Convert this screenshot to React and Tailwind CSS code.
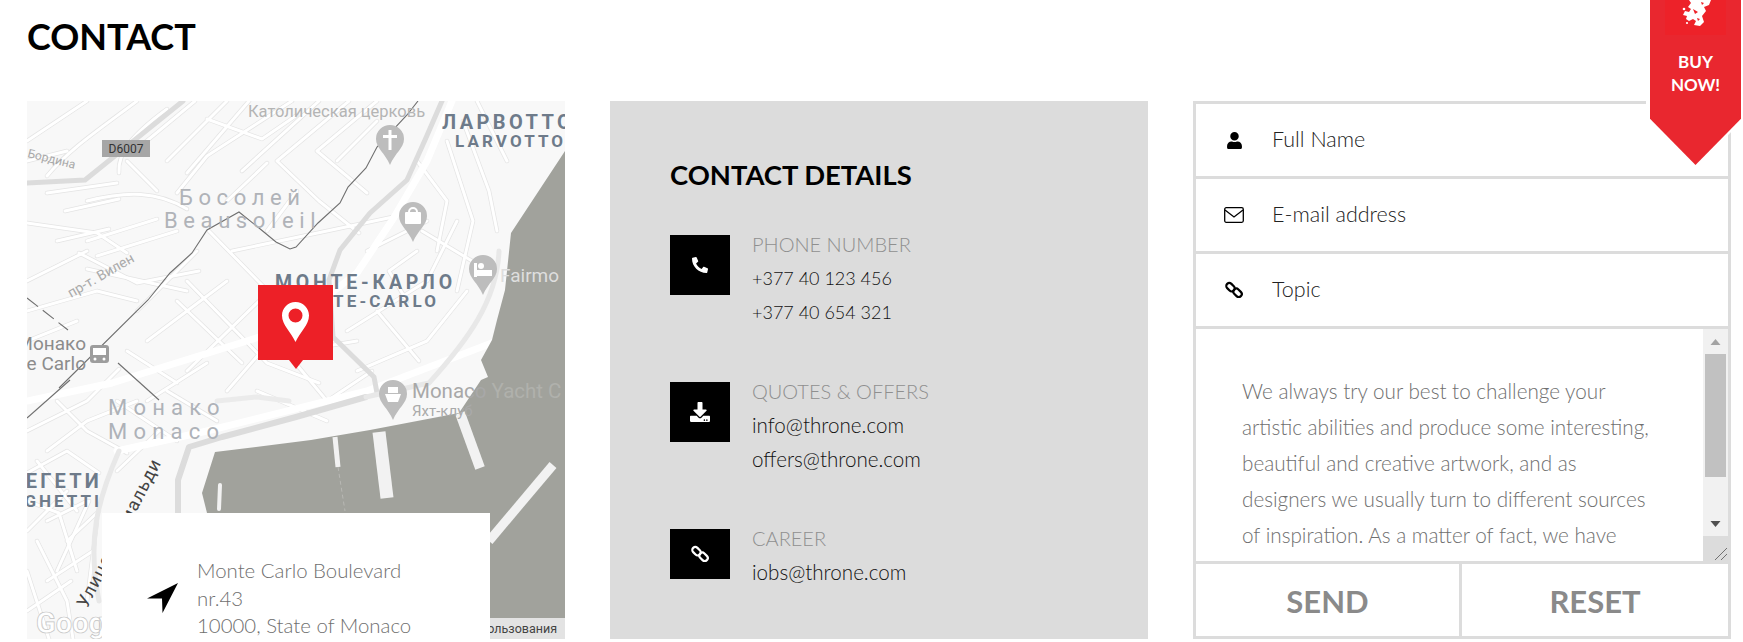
import { FaPhone, FaDownload, FaUser } from 'react-icons/fa';

// white street network of the map, in map coordinates
const STREETS = [
  'M60 0 L0 40', 'M110 0 C70 30 40 50 20 75', 'M140 8 C110 30 90 50 92 72', 'M200 0 L140 60', 'M222 0 L160 72',
  'M265 0 L180 55 L150 92', 'M292 0 L215 70', 'M322 0 L250 60 L292 100 L332 132', 'M350 0 L290 50 L340 92',
  'M0 122 L70 132 L100 152', 'M52 152 L110 182 L172 170', 'M60 168 L160 190', 'M30 140 L82 128', 'M38 110 L92 98',
  'M0 60 L40 50', 'M160 180 L240 262 L292 282', 'M182 130 L282 232', 'M205 150 L300 130 L366 116', 'M150 200 L215 262',
  'M110 210 L170 150', 'M120 240 L200 180', 'M160 270 L232 200', 'M200 290 L265 215', 'M250 240 L300 300', 'M0 180 L60 150',
  'M320 230 L400 180 L430 120', 'M330 270 L400 240 L440 190', 'M380 200 L362 170 L390 150', 'M420 40 L446 120 L430 190',
  'M436 20 L462 90 L470 130', 'M390 60 L420 100 L410 150', 'M340 150 L400 120', 'M0 330 L60 300 L92 268', 'M20 350 L60 320 L110 300',
  'M30 300 L60 330 L100 352', 'M0 372 L40 350 L72 372', 'M0 400 L32 412 L50 470', 'M20 420 L60 400', 'M10 440 L40 500 L46 538',
  'M0 470 L22 538', 'M62 400 L30 470', 'M70 420 L60 500', 'M120 300 L180 262', 'M230 290 L300 320', 'M90 300 L150 340',
  'M300 300 L345 270', 'M270 90 L240 130', 'M100 60 L130 90', 'M60 100 C100 90 130 90 160 108',
  'M168 0 L110 48', 'M20 92 L90 82', 'M60 140 L130 118', 'M70 155 L150 130', 'M0 210 L70 190 L110 200', 'M0 240 L50 220',
  'M180 18 L235 38 L270 14', 'M240 62 L200 100', 'M310 60 L350 20', 'M450 0 L480 60', 'M395 130 L445 160', 'M350 210 L392 260',
  'M10 360 L50 410', 'M0 430 L40 390', 'M40 440 L72 410', 'M20 480 L66 450', 'M0 510 L44 480', 'M90 370 L132 330',
  'M140 290 L190 320', 'M270 250 L330 240', 'M100 250 L150 282',
];

const BOULEVARDS = ['M0 300 L85 282 L258 228 L330 172 L366 118 L400 60 L425 0', 'M90 350 L180 330 L340 290 L470 240'];

function Pin({ x, y, children }) {
  return (
    <g transform={`translate(${x} ${y})`}>
      <path d="M-14 14a14 14 0 1 1 28 0c0 9-9 14-14 26c-5-12-14-17-14-26z" fill="#bdbdbd" />
      {children}
    </g>
  );
}

function MapDrawing() {
  return (
    <svg viewBox="0 0 538 538" className="absolute inset-0 h-full w-full" fontFamily="Roboto, sans-serif">
      <rect width="538" height="538" fill="#f8f8f8" />

      {/* streets, a pale casing under a white core */}
      <g fill="none" strokeLinecap="round" strokeLinejoin="round">
        <g stroke="#e4e4e4" strokeWidth="4.4">
          {STREETS.map((d, i) => <path key={i} d={d} />)}
        </g>
        <g stroke="#ffffff" strokeWidth="3">
          {STREETS.map((d, i) => <path key={i} d={d} />)}
        </g>
        {BOULEVARDS.map((d) => <path key={d} d={d} stroke="#ffffff" strokeWidth="7" />)}
      </g>

      {/* main roads */}
      <g fill="none" stroke="#dcdcdc" strokeWidth="5" strokeLinejoin="round" strokeLinecap="round">
        <path d="M156 0 L58 79 L0 82" />
        <path d="M415 0 L398 39 L380 79 L343 112 L313 149 L302 179 L306 236 L347 276 L350 292" />
        <path d="M339 296 L269 316 L195 336 L162 346 L151 379 L151 415" strokeWidth="6" />
        <path d="M92 350 C70 400 60 440 72 500" stroke="#e8e8e8" strokeWidth="5" />
        <path d="M472 150 C470 200 440 240 402 282 L339 296" stroke="#e8e8e8" strokeWidth="5" />
        <path d="M190 300 L230 296 L262 300" stroke="#ebebeb" strokeWidth="5" />
      </g>

      {/* sea and piers */}
      <path d="M538 50 L484 132 L478 189 L470 219 L465 239 L454 259 L461 276 L454 279 L432 312 L343 329 L284 339 L188 351 L175 392 L180 412 L180 538 L538 538 Z" fill="#a1a29c" />
      <g fill="none" stroke="#f2f2f2" strokeLinecap="butt">
        <path d="M308 336 L311 366" strokeWidth="5" />
        <path d="M311 366 L318 410" stroke="#b8b8b4" strokeWidth="1" strokeDasharray="4 3" />
        <path d="M352 331 L360 397" strokeWidth="13" />
        <path d="M433 312 L453 367" strokeWidth="10" />
        <path d="M526 364 L462 440" strokeWidth="9" />
        <path d="M193 384 L192 408" strokeWidth="4" strokeLinecap="round" />
      </g>

      {/* rail lines */}
      <g fill="none" stroke="#6f6f6f" strokeWidth="1.1">
        <path d="M391 0 L380 14 L350 46 L339 67 L321 86 L313 102 L291 122 L269 146 L263 148 L249 141 L232 127 L212 111 L180 129 L165 152 L143 172 L121 199 L32 287" />
        <path d="M43 279 L0 317" />
        <path d="M0 197 L41 229" strokeDasharray="14 6" />
        <path d="M91 262 L132 299" />
      </g>

      {/* places */}
      <Pin x={363} y={24}><rect x="-1.5" y="5" width="3" height="20" fill="#fff" /><rect x="-7" y="10" width="14" height="3" fill="#fff" /></Pin>
      <Pin x={386} y={101}><rect x="-8" y="10" width="16" height="12" rx="1" fill="#fff" /><circle cy="10" r="4" fill="none" stroke="#fff" strokeWidth="2" /></Pin>
      <Pin x={456} y={154}><rect x="-9" y="15" width="18" height="6" fill="#fff" /><rect x="-9" y="8" width="3" height="14" fill="#fff" /><circle cx="-2" cy="11" r="3" fill="#fff" /></Pin>
      <Pin x={366} y={279}><path d="M-8 14h16l-3 8h-10z" fill="#fff" /><rect x="-5" y="7" width="10" height="6" fill="#fff" /></Pin>
      <rect x="63" y="244" width="19" height="18" rx="3" fill="#9d9d9d" />
      <rect x="66" y="247" width="13" height="7" fill="#fff" />
      <circle cx="68" cy="258" r="1.5" fill="#fff" />
      <circle cx="77" cy="258" r="1.5" fill="#fff" />

      {/* labels */}
      <text x="221" y="16" fontSize="16.5" fill="#b4b4b4">Католическая церковь</text>
      <rect x="75" y="39" width="48" height="17" fill="#a6a6a6" />
      <text x="99" y="52" fontSize="12" textAnchor="middle" fill="#333">D6007</text>
      <text x="0" y="56" fontSize="12" fill="#a8a8a8" transform="rotate(14 0 56)">Бордина</text>
      <text x="152" y="104" fontSize="22" letterSpacing="5.6" fill="#b0b3b8">Босолей</text>
      <text x="137" y="127" fontSize="22" letterSpacing="5.6" fill="#b0b3b8">Beausoleil</text>
      <text x="44" y="197" fontSize="14" fill="#aaa" transform="rotate(-30 44 197)">пр-т. Вилен</text>
      <text x="415" y="28" fontSize="20" fontWeight="700" letterSpacing="3.4" fill="#6e7b8a">ЛАРВОТТО</text>
      <text x="428" y="46" fontSize="17" fontWeight="700" letterSpacing="3.1" fill="#6e7b8a">LARVOTTO</text>
      <text x="248" y="188" fontSize="19.5" fontWeight="700" letterSpacing="3.8" fill="#6e7b8a">МОНТЕ-КАРЛО</text>
      <text x="258" y="206" fontSize="17" fontWeight="700" letterSpacing="3.2" fill="#6e7b8a">MONTE-CARLO</text>
      <text x="473" y="181" fontSize="19" fill="#dedede">Fairmo</text>
      <text x="59" y="249" fontSize="19" textAnchor="end" fill="#8c8c8c">Монако</text>
      <text x="59" y="269" fontSize="19" textAnchor="end" fill="#8c8c8c">Monte Carlo</text>
      <text x="81" y="314" fontSize="22" letterSpacing="6.2" fill="#aeb2b8">Монако</text>
      <text x="81" y="338" fontSize="22" letterSpacing="6.2" fill="#aeb2b8">Monaco</text>
      <text x="385" y="297" fontSize="20.5" fill="#a8a8a8">Monaco <tspan fill="#b0b1ac">Yacht C</tspan></text>
      <text x="385" y="315" fontSize="15" fill="#aaa">Яхт-клуб</text>
      <text x="75" y="387" fontSize="20" fontWeight="700" letterSpacing="3.2" textAnchor="end" fill="#6e7b8a">ЕГЕТИ</text>
      <text x="75" y="406" fontSize="17" fontWeight="700" letterSpacing="3" textAnchor="end" fill="#6e7b8a">GHETTI</text>
      <text x="60" y="508" fontSize="18" letterSpacing="1" fill="#444" transform="rotate(-63 60 508)">Улица Гримальди</text>
      <text x="9" y="532" fontSize="29" fontWeight="700" fill="#fff" stroke="#c4c4c4" strokeWidth="0.7">Google</text>

      {/* attribution */}
      <rect x="463" y="517" width="75" height="21" fill="#e3e3e3" />
      <text x="530" y="532" fontSize="12.5" textAnchor="end" fill="#444">использования</text>
    </svg>
  );
}

function LionMark() {
  return (
    <svg viewBox="0 0 30 26" className="h-[26px] w-[30px]" fill="#fff">
      <path d="M8 0h22l-2 5-5 2 2 4-4 5 2 6-4 4-6-1 2-4-3-2-4 2-3-2 1-3-4-1 2-4 4 1 2-3-3-2 3-4z" />
      <circle cx="3" cy="9" r="1.3" />
      <circle cx="6" cy="23" r="1.1" />
      <path d="M12 9l5 3-3 2zM20 2l3 1-2 2zM16 18l3 1-2 2z" fill="#ed2229" />
    </svg>
  );
}

// two chain links running from top left to bottom right
function LinkIcon({ size = 18 }) {
  return (
    <svg viewBox="0 0 18 18" width={size} height={size} fill="none" stroke="currentColor" strokeWidth="2.2">
      <rect x="0.8" y="3.2" width="9.4" height="6" rx="3" transform="rotate(45 5.5 6.2)" />
      <rect x="7.8" y="8.8" width="9.4" height="6" rx="3" transform="rotate(45 12.5 11.8)" />
    </svg>
  );
}

function DetailRow({ icon, label, lines, iconH = 'h-[60px]', lineSize = 'text-[20.6px]', className = '' }) {
  return (
    <div className={`flex gap-[22px] ${className}`}>
      <div className={`mt-[8px] flex w-[60px] shrink-0 items-center justify-center bg-black text-white ${iconH}`}>{icon}</div>
      <div className="leading-[34px]">
        <div className="text-[20px] font-light text-[#8f8f8f]">{label}</div>
        {lines.map((l) => <div key={l} className={`font-light text-[#111] ${lineSize}`}>{l}</div>)}
      </div>
    </div>
  );
}

function Field({ icon, label }) {
  return (
    <div className="flex h-[75px] shrink-0 items-center border-b-[3px] border-[#dcdcdc]">
      <div className="flex w-[76px] shrink-0 justify-center text-black">{icon}</div>
      <span className="mb-[2px] text-[21.5px] font-light text-[#222]">{label}</span>
    </div>
  );
}

export default function App() {
  return (
    <div className="relative h-[642px] overflow-hidden bg-white text-black [font-family:Lato,sans-serif]">
      <h1 className="h-[101px] pl-[27px] pt-[14px] text-[36px] font-bold leading-[44px]">CONTACT</h1>

      <div className="grid grid-cols-3 gap-x-[45px] pl-[27px] pr-[12px]">
        {/* MAP */}
        <div className="relative h-[538px] overflow-hidden">
          <MapDrawing />
          <div className="absolute left-[231px] top-[184px] flex h-[75px] w-[75px] items-center justify-center bg-[#ed2027]">
            <svg viewBox="0 0 27 40" className="mb-[2px] h-[40px] w-[27px]">
              <path fillRule="evenodd" fill="#fff" d="M13.5 0C6 0 0 6 0 13.5 0 23 9 30 13.5 40 18 30 27 23 27 13.5 27 6 21 0 13.5 0zm0 6.5a7 7 0 1 1 0 14 7 7 0 0 1 0-14z" />
            </svg>
            <div className="absolute left-[31px] top-[75px] h-0 w-0 border-x-[7px] border-t-[9px] border-x-transparent border-t-[#ed2027]" />
          </div>
          <div className="absolute left-[75px] top-[412px] flex h-[126px] w-[388px] overflow-hidden bg-white pl-[45px] pt-[44px]">
            <svg viewBox="0 0 31 30" className="mr-[19px] mt-[26px] h-[30px] w-[31px] shrink-0">
              <path d="M31 0L0 15.5L15 15.5L15.5 30Z" fill="#000" />
            </svg>
            <div className="whitespace-nowrap text-[20.4px] font-light leading-[27.5px] text-[#6f6f6f]">
              <div>Monte Carlo Boulevard</div>
              <div>nr.43</div>
              <div>10000, State of Monaco</div>
            </div>
          </div>
        </div>

        {/* CONTACT DETAILS */}
        <div className="flex h-[538px] flex-col bg-[#dcdcdc] pl-[60px] pt-[57px]">
          <h2 className="mb-[35px] text-[27.4px] font-bold leading-[34px]">CONTACT DETAILS</h2>
          <DetailRow className="mb-[45px]" lineSize="text-[18px]" icon={<FaPhone className="-scale-x-100 text-[16px]" />} label="PHONE NUMBER" lines={['+377 40 123 456', '+377 40 654 321']} />
          <DetailRow className="mb-[45px]" icon={<FaDownload className="text-[20px]" />} label="QUOTES & OFFERS" lines={['info@throne.com', 'offers@throne.com']} />
          <DetailRow iconH="h-[50px]" icon={<LinkIcon />} label="CAREER" lines={['iobs@throne.com']} />
        </div>

        {/* FORM */}
        <div className="flex h-[538px] flex-col border-[3px] border-[#dcdcdc]">
          <Field icon={<FaUser className="text-[17px]" />} label="Full Name" />
          <Field icon={
            <svg viewBox="0 0 20 16" className="h-[16px] w-[20px]" fill="none" stroke="currentColor" strokeWidth="1.3">
              <rect x="0.7" y="0.7" width="18.6" height="14.6" rx="1.5" />
              <path d="M1 3l9 7 9-7" />
            </svg>
          } label="E-mail address" />
          <Field icon={<LinkIcon />} label="Topic" />

          <div className="flex h-[235px] shrink-0 border-b-[3px] border-[#dcdcdc]">
            <div className="flex-1 overflow-hidden pl-[46px] pr-[45px] pt-[44px] text-[20.7px] font-light leading-[36px] text-[#6f6f6f]">
              We always try our best to challenge your artistic abilities and produce some interesting, beautiful and creative artwork, and as designers we usually turn to different sources of inspiration. As a matter of fact, we have
            </div>
            <div className="flex w-[25px] shrink-0 flex-col bg-[#f1f1f1]">
              <div className="flex h-[25px] shrink-0 items-center justify-center">
                <svg viewBox="0 0 10 6" className="h-[6px] w-[11px]"><path d="M0 6L5 0L10 6Z" fill="#a3a3a3" /></svg>
              </div>
              <div className="flex-1 px-[2px]">
                <div className="h-[123px] bg-[#c1c1c1]" />
              </div>
              <div className="flex h-[25px] shrink-0 items-center justify-center">
                <svg viewBox="0 0 10 6" className="h-[6px] w-[11px]"><path d="M0 0L5 6L10 0Z" fill="#505050" /></svg>
              </div>
              <div className="flex h-[25px] shrink-0 items-end justify-end bg-[#dcdcdc]">
                <svg viewBox="0 0 14 14" className="h-[14px] w-[14px]"><path d="M1 13L13 1M7 13L13 7" stroke="#555" strokeWidth="0.8" /></svg>
              </div>
            </div>
          </div>

          <div className="grid flex-1 grid-cols-2 text-[31px] font-bold text-[#8a8a8a]">
            <div className="flex items-center justify-center border-r-[3px] border-[#dcdcdc] pt-[2px]">SEND</div>
            <div className="flex items-center justify-center pt-[2px]">RESET</div>
          </div>
        </div>
      </div>

      {/* BUY NOW ribbon, white halo behind it */}
      <div className="absolute right-0 top-0 h-[169px] w-[97px] bg-white [clip-path:polygon(0_0,100%_0,100%_71%,50%_100%,0_71%)]" />
      <div className="absolute right-[2px] top-0 flex h-[165px] w-[91px] flex-col items-center bg-[#e9272f] [clip-path:polygon(0_0,100%_0,100%_72%,50%_100%,0_72%)]">
        <div className="flex h-[35px] w-[61px] items-start justify-center bg-[#ed2229]"><LionMark /></div>
        <div className="mt-[15px] text-center text-[17px] font-bold leading-[23px] text-white">BUY<br />NOW!</div>
      </div>
    </div>
  );
}
